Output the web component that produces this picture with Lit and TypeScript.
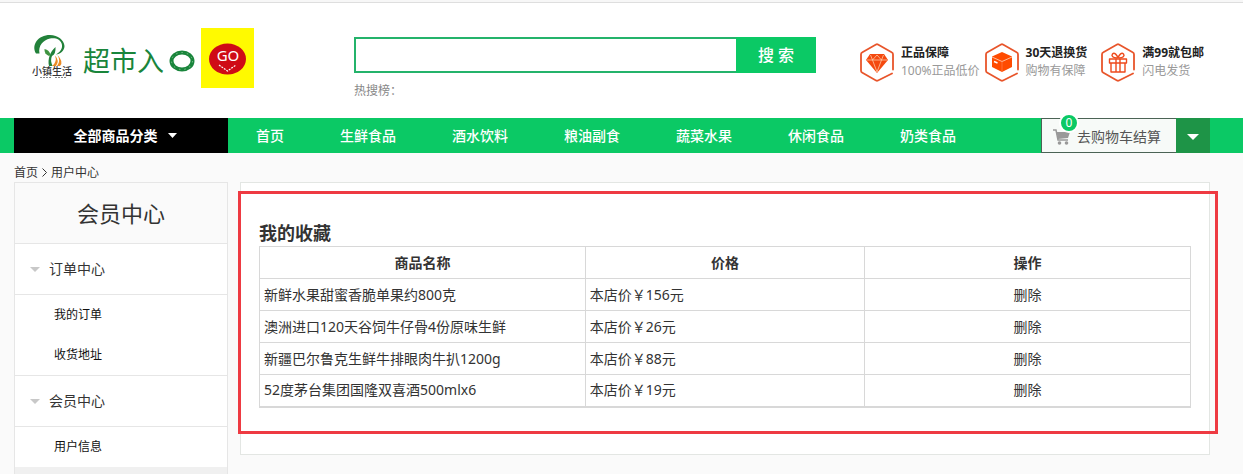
import { LitElement, html, css, svg } from "lit";
import { customElement } from "lit/decorators.js";

const hexagon = svg`<path d="M33 31.500L19 38.500Q18 39 17 38.500L3 30.500Q2 30 2 28.500V12.500Q2 11 3 10.500L17 2.500Q18 2 19 2.500L33 10.500Q34 11 34 12.500V27.500" fill="none" stroke="#e8552b" stroke-width="1.800" stroke-linecap="round"/>`;

const diamondIcon = html`<svg class="perk-icon" viewBox="0 0 36 40" aria-hidden="true">
  ${hexagon}
  <path d="M11 12H25L29 18L18 31L7 18Z" fill="#f4490f"/>
  <path d="M8 18H28M11.500 13L13.500 18L18 30L22.500 18L24.500 13M13.500 18L18 13L22.500 18" fill="none" stroke="#ffd9b8" stroke-width="0.700"/>
</svg>`;

const boxIcon = html`<svg class="perk-icon" viewBox="0 0 36 40" aria-hidden="true">
  ${hexagon}
  <path d="M18 10L28 14.500V25L18 30L8 25V14.500Z" fill="#ff4b00"/>
  <path d="M8 15L18 19.500L28 15" fill="none" stroke="#ffc9ae" stroke-width="0.900"/>
  <path d="M18 19.500V30" stroke="#ff8a5a" stroke-width="0.600"/>
  <path d="M10 19.500L13.500 21" stroke="#fff" stroke-width="1.400"/>
</svg>`;

const giftIcon = html`<svg class="perk-icon" viewBox="0 0 36 40" aria-hidden="true">
  ${hexagon}
  <g fill="none" stroke="#ee4a1c" stroke-width="1.400" stroke-linejoin="round">
    <path d="M9.500 17H26.500V21H9.500ZM11 21V30H25V21M16 17V30M20 17V30"/>
    <path d="M17 16C13 16 11 14 12.500 12C14.500 10 17 13 18 16C19 13 21.500 10 23.500 12C25 14 23 16 19 16"/>
  </g>
</svg>`;

const products = [
  { name: "新鲜水果甜蜜香脆单果约800克", price: "本店价￥156元" },
  { name: "澳洲进口120天谷饲牛仔骨4份原味生鲜", price: "本店价￥26元" },
  { name: "新疆巴尔鲁克生鲜牛排眼肉牛扒1200g", price: "本店价￥88元" },
  { name: "52度茅台集团国隆双喜酒500mlx6", price: "本店价￥19元" },
];

const perks = [
  { icon: diamondIcon, title: "正品保障", note: "100%正品低价" },
  { icon: boxIcon, title: "30天退换货", note: "购物有保障" },
  { icon: giftIcon, title: "满99就包邮", note: "闪电发货" },
];

const categories = ["首页", "生鲜食品", "酒水饮料", "粮油副食", "蔬菜水果", "休闲食品", "奶类食品"];

const menu = [
  { title: "订单中心", items: ["我的订单", "收货地址"] },
  { title: "会员中心", items: ["用户信息"] },
];

@customElement("app-root")
export class AppRoot extends LitElement {
  static styles = css`
    :host {
      display: block;
      height: 100vh;
      overflow: hidden;
      background: #fafafa;
      color: #333;
      font: 14px/20px "Noto Sans", "Noto Sans CJK SC", sans-serif;
    }
    * { box-sizing: border-box; }
    a { color: inherit; text-decoration: none; }
    button { font: inherit; border: 0; padding: 0; cursor: pointer; }
    svg { display: block; flex: none; }

    .topline { height: 3px; border-bottom: 1px solid #dedede; background: #f7f7f7; }
    .header {
      display: flex;
      align-items: flex-start;
      height: 115px;
      padding: 25px 39px 0 24px;
      background: #fff;
    }
    .logo { width: 230px; height: 60px; margin-right: 100px; }
    .mark-text { font: 500 10px "Noto Sans CJK SC", sans-serif; fill: #333; }
    .brand-text { font: 27px "Noto Sans CJK SC", sans-serif; fill: #19853b; }
    .go-text { font: 15px "Noto Sans", sans-serif; fill: #fff; }

    .search { flex: 0 1 462px; min-width: 0; padding-top: 9px; }
    .search-row { display: flex; height: 36px; }
    .search-input {
      flex: 1;
      min-width: 0;
      border: 2px solid #24b36b;
      border-right: 0;
      padding: 0 8px;
      background: #fff;
      font: inherit;
      outline: 0;
    }
    .search-button { width: 80px; background: #0bc965; color: #fff; font-size: 16px; font-weight: 500; }
    .hot { margin: 8px 0 0; font-size: 12px; color: #888; }

    .perks { display: flex; gap: 4px; margin: 14px 0 0 auto; padding: 0; list-style: none; }
    .perk { display: flex; gap: 6px; font-size: 12px; line-height: 18px; white-space: nowrap; }
    .perk:nth-child(2) { margin-right: 9px; }
    .perk-icon { width: 36px; height: 40px; }
    .perk-text { display: flex; flex-direction: column; padding-top: 2px; }
    .perk-title { color: #222; font-weight: 700; }
    .perk-note { color: #999; }

    .nav { display: flex; height: 35px; padding: 0 33px 0 14px; background: #0bc965; color: #fff; }
    .all {
      display: flex;
      align-items: center;
      justify-content: center;
      gap: 10px;
      width: 214px;
      padding-left: 8px;
      background: #000;
      color: #fff;
      font-weight: 700;
    }
    .links { display: flex; }
    .link { padding: 0 28px; line-height: 36px; font-weight: 500; white-space: nowrap; }
    .cart { display: flex; margin-left: auto; }
    .cart-link {
      position: relative;
      display: flex;
      align-items: center;
      gap: 7px;
      width: 135px;
      padding: 2px 0 0 11px;
      border: 1px solid #4b6355;
      border-right: 0;
      background: #f7faf8;
      color: #555;
      white-space: nowrap;
    }
    .badge {
      position: absolute;
      left: 17px;
      top: -6px;
      width: 20px;
      height: 20px;
      border: 2px solid #fff;
      border-radius: 50%;
      background: #0bc965;
      color: #fff;
      font-size: 12px;
      line-height: 16px;
      text-align: center;
    }
    .cart-toggle {
      display: flex;
      align-items: center;
      justify-content: center;
      width: 34px;
      padding-top: 2px;
      background: #1e9447;
    }

    .crumbs { display: flex; align-items: center; gap: 4px; height: 29px; padding: 10px 14px 0; font-size: 12px; }
    .main { display: flex; align-items: flex-start; gap: 12px; padding: 0 33px 0 14px; }
    .side { flex: none; width: 214px; border: 1px solid #e6e6e6; background: #fff; }
    .side-title {
      margin: 0;
      background: #fafafa;
      font-size: 22px;
      font-weight: 400;
      line-height: 60px;
      text-align: center;
    }
    .group-title {
      display: flex;
      align-items: center;
      gap: 9px;
      width: 100%;
      height: 51px;
      padding-left: 15px;
      border-top: 1px solid #e6e6e6;
      background: #fff;
      color: #333;
    }
    .group-list {
      margin: 0;
      padding: 0;
      border-top: 1px solid #e6e6e6;
      list-style: none;
      font-size: 12px;
      line-height: 40px;
    }
    .group-item { padding-left: 39px; color: #111; }
    .group-list:last-child { border-bottom: 8px solid #f0f0f0; }

    .panel {
      position: relative;
      flex: 1;
      min-width: 0;
      padding: 38px 18px 46px;
      border: 1px solid #e3e6e3;
      background: #fff;
    }
    .highlight {
      position: absolute;
      inset: 8px -9px 20px -3px;
      border: 3px solid #ee3a42;
      pointer-events: none;
    }
    .panel-title { margin: 0; font-size: 18px; line-height: 25px; }
    .goods {
      width: 100%;
      border-bottom: 2px solid #d8d8d8;
      border-collapse: collapse;
      table-layout: fixed;
    }
    .goods th, .goods td { height: 32px; padding: 0 4px; border: 1px solid #d8d8d8; text-align: left; }
    .goods .name { width: 35%; }
    .goods .price { width: 30%; }
    .goods th, .goods .action { text-align: center; }
  `;

  render() {
    return html`
      <div class="topline"></div>
      <header class="header">
        <a href="#" aria-label="小镇生活 超市入口">
          <svg class="logo" viewBox="0 0 230 60">
            <path d="M12 25.500C7 17 14 7 26 7C34 7 40 12 40.500 18C40.500 23 36 26 32 26.500C36 24 38.500 21 38 17C37 11 31 9.500 26 10.500C19 12 14 18 15.500 25.500Z" fill="#22813a"/>
            <path d="M25 38C23.500 31 26 24 31.500 19Q32 26 28 28Q26 32 28.500 38Z" fill="#22813a"/>
            <path d="M25 28Q20 26 20.500 21Q25.500 22 26.500 27Z" fill="#3f9440"/>
            <path d="M28 38Q33.500 34 31 27.500Q36 33 32 38ZM33 38Q37 33 33.500 27Q40 34 36 38Z" fill="#eb8b25"/>
            <text class="mark-text" x="8" y="47">小镇生活</text>
            <path d="M16 49.500H28M31 49.500H42" stroke="#888" stroke-dasharray="2 1" stroke-width="1"/>
            <text class="brand-text" x="59" y="43">超市入</text>
            <ellipse cx="158" cy="33" rx="10.500" ry="8.500" fill="none" stroke="#19853b" stroke-width="4"/>
            <ellipse cx="158" cy="33" rx="10.500" ry="8.500" fill="none" stroke="#7fbf8f" stroke-width="1" stroke-dasharray="1.500 4"/>
            <rect x="177" width="53" height="60" fill="#fffa00"/>
            <ellipse cx="203.500" cy="31" rx="18.500" ry="15.500" fill="#cf0b16"/>
            <text class="go-text" x="204" y="33" text-anchor="middle">GO</text>
            <path d="M195 37L203.500 43L212 37" fill="none" stroke="#fff" stroke-width="1.200" stroke-dasharray="2 1"/>
          </svg>
        </a>
        <form class="search" @submit=${(e: Event) => e.preventDefault()}>
          <div class="search-row">
            <input class="search-input" type="text" aria-label="搜索" />
            <button class="search-button">搜 索</button>
          </div>
          <p class="hot">热搜榜：</p>
        </form>
        <ul class="perks">
          ${perks.map(
            (p) => html`<li class="perk">
              ${p.icon}
              <div class="perk-text">
                <span class="perk-title">${p.title}</span>
                <span class="perk-note">${p.note}</span>
              </div>
            </li>`
          )}
        </ul>
      </header>

      <nav class="nav">
        <button class="all">
          全部商品分类
          <svg width="9" height="5" viewBox="0 0 9 5"><path d="M0 0H9L4.500 5Z" fill="#fff"/></svg>
        </button>
        <div class="links">${categories.map((c) => html`<a class="link" href="#">${c}</a>`)}</div>
        <div class="cart">
          <a class="cart-link" href="#">
            <svg width="17" height="16" viewBox="0 0 17 16" aria-hidden="true">
              <path d="M0 1H3L5 11H15" fill="none" stroke="#999" stroke-width="1.500"/>
              <path d="M3.500 3H17L15 9L5 10Z" fill="#999"/>
              <circle cx="6.500" cy="14" r="1.800" fill="#999"/>
              <circle cx="13.500" cy="14" r="1.800" fill="#999"/>
            </svg>
            去购物车结算
            <span class="badge">0</span>
          </a>
          <button class="cart-toggle" aria-label="展开购物车">
            <svg width="12" height="6" viewBox="0 0 12 6"><path d="M0 0H12L6 6Z" fill="#fff"/></svg>
          </button>
        </div>
      </nav>

      <div class="crumbs">
        <a href="#">首页</a>
        <svg width="5" height="9" viewBox="0 0 5 9"><path d="M0.500 0.500L4.500 4.500L0.500 8.500" fill="none" stroke="#333"/></svg>
        <a href="#">用户中心</a>
      </div>

      <div class="main">
        <aside class="side">
          <h2 class="side-title">会员中心</h2>
          ${menu.map(
            (g) => html`<button class="group-title">
                <svg width="10" height="5" viewBox="0 0 10 5"><path d="M0 0H10L5 5Z" fill="#c8c8c8"/></svg>
                ${g.title}
              </button>
              <ul class="group-list">
                ${g.items.map((i) => html`<li class="group-item"><a href="#">${i}</a></li>`)}
              </ul>`
          )}
        </aside>
        <section class="panel">
          <h3 class="panel-title">我的收藏</h3>
          <table class="goods">
            <thead>
              <tr><th class="name">商品名称</th><th class="price">价格</th><th>操作</th></tr>
            </thead>
            <tbody>
              ${products.map(
                (p) => html`<tr>
                  <td>${p.name}</td>
                  <td>${p.price}</td>
                  <td class="action"><a href="#">删除</a></td>
                </tr>`
              )}
            </tbody>
          </table>
          <div class="highlight"></div>
        </section>
      </div>
    `;
  }
}
